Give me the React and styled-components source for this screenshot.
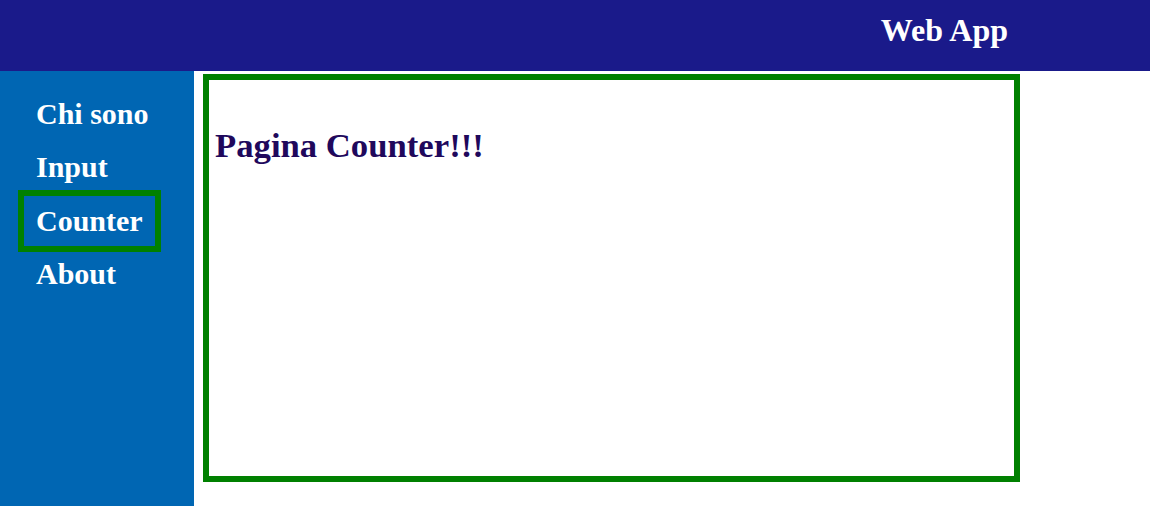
import styled, { createGlobalStyle } from 'styled-components';

const GlobalStyle = createGlobalStyle`
  html, body {
    margin: 0;
    padding: 0;
    background: #ffffff;
  }
  body {
    font-family: "Liberation Serif", "Times New Roman", serif;
  }
`;

const Page = styled.div`
  display: flex;
  flex-direction: column;
  min-height: 506px;
`;

const Header = styled.header`
  height: 71px;
  background: #1a1a8a;
  display: flex;
  justify-content: flex-end;
  align-items: flex-start;
  padding-right: 142px;
`;

const Brand = styled.h1`
  margin: 0;
  padding-top: 12px;
  font-size: 32px;
  line-height: 1.15;
  font-weight: bold;
  color: #ffffff;
`;

const Body = styled.div`
  flex: 1;
  display: flex;
  align-items: flex-start;
`;

const Sidebar = styled.nav`
  width: 194px;
  align-self: stretch;
  min-height: 435px;
  background: #0066b3;
  padding-top: 18px;
  box-sizing: border-box;
  display: flex;
  flex-direction: column;
  gap: 3.4px;
`;

const NavItem = styled.a`
  display: block;
  width: fit-content;
  margin-left: 24px;
  padding: 0 12px 0 12px;
  height: 50px;
  line-height: 50px;
  font-size: 30px;
  font-weight: bold;
  color: #ffffff;
  text-decoration: none;
  outline: ${({ active }) => (active ? '6px solid #008000' : 'none')};
  cursor: pointer;
`;

const Content = styled.main`
  margin: 3px 0 0 9px;
  width: 817px;
  height: 408px;
  box-sizing: border-box;
  border: 6px solid #008000;
  padding: 0 6px;
`;

const Title = styled.h2`
  margin: 46px 0 0;
  font-size: 34.7px;
  line-height: 1.15;
  font-weight: bold;
  color: #20085c;
`;

const links = ['Chi sono', 'Input', 'Counter', 'About'];

const App = () => {
  const current = 'Counter';

  return (
    <Page>
      <GlobalStyle />
      <Header>
        <Brand>Web App</Brand>
      </Header>
      <Body>
        <Sidebar>
          {links.map((label) => (
            <NavItem key={label} active={label === current}>
              {label}
            </NavItem>
          ))}
        </Sidebar>
        <Content>
          <Title>Pagina Counter!!!</Title>
        </Content>
      </Body>
    </Page>
  );
};

export default App;
